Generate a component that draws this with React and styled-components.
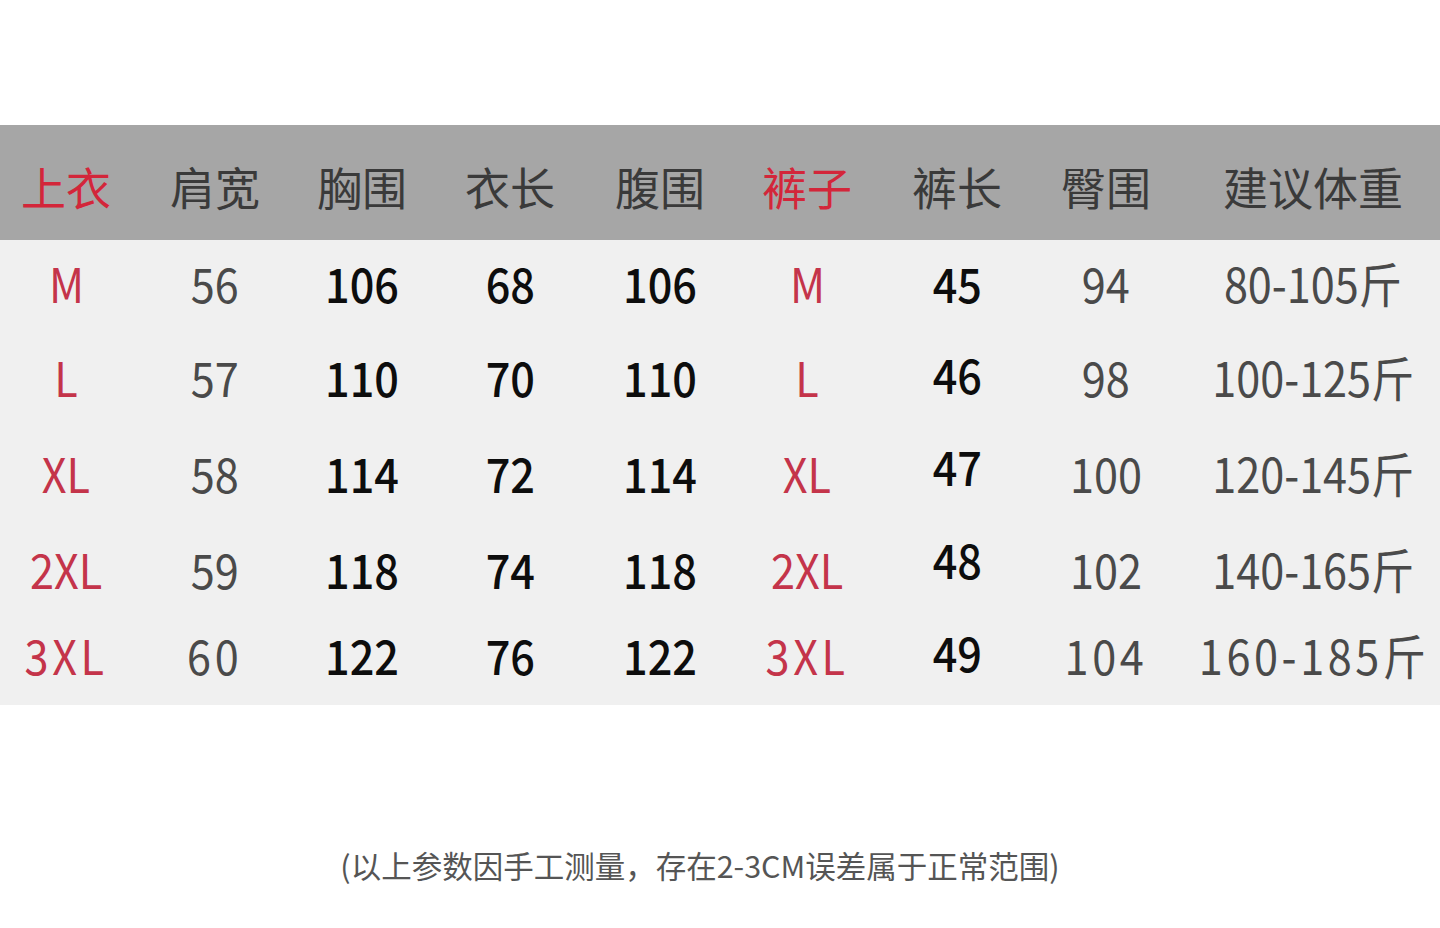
import React from 'react';
import styled, { createGlobalStyle } from 'styled-components';

const GlobalStyle = createGlobalStyle`
  html, body {
    margin: 0;
    padding: 0;
    background: #fff;
    font-family: "Noto Sans CJK SC", "Noto Sans", sans-serif;
  }
`;

const Page = styled.div`
  width: 1440px;
  height: 928px;
  padding-top: 125px;
  box-sizing: border-box;
  background: #fff;
`;

const Table = styled.div`
  width: 100%;
`;

const COLS = '132px 166px 128px 168px 132px 162px 138px 160px 1fr';

const HeaderRow = styled.div`
  display: grid;
  grid-template-columns: ${COLS};
  height: 115px;
  padding-top: 8px;
  box-sizing: border-box;
  background: #a6a6a6;
  align-items: center;
`;

const HeadCell = styled.div`
  text-align: center;
  font-size: 45px;
  line-height: 1;
  color: ${p => (p.$red ? '#d3263a' : '#3a3a3a')};
`;

const Body = styled.div`
  background: #f0f0f0;
  padding-bottom: 9px;
`;

const Row = styled.div`
  display: grid;
  grid-template-columns: ${COLS};
  height: ${p => p.$h}px;
  align-items: center;
`;

const tones = {
  red: { color: '#c4344a', weight: 400 },
  gray: { color: '#4a4a4a', weight: 400 },
  dark: { color: '#0d0d0d', weight: 500 },
};

const Cell = styled.div`
  text-align: center;
  line-height: 1;
  white-space: nowrap;
`;

const Value = styled.span`
  display: inline-block;
  font-size: 48px;
  color: ${p => tones[p.$tone].color};
  font-weight: ${p => tones[p.$tone].weight};
  letter-spacing: ${p => (p.$spread && p.$tone !== 'dark' ? 4 : 0)}px;
  transform: translateY(${p => (p.$lift || 0) - 4}px) scaleX(0.9);
`;

const Note = styled.div`
  margin-top: 140px;
  padding-right: 40px;
  text-align: center;
  line-height: 40px;
  font-size: 30.5px;
  color: #555;
  white-space: nowrap;
`;

const headers = [
  { t: '上衣', red: true },
  { t: '肩宽' },
  { t: '胸围' },
  { t: '衣长' },
  { t: '腹围' },
  { t: '裤子', red: true },
  { t: '裤长' },
  { t: '臀围' },
  { t: '建议体重' },
];

const colTones = ['red', 'gray', 'dark', 'dark', 'dark', 'red', 'dark', 'gray', 'gray'];

const rows = [
  { h: 92, lift: 0, cells: ['M', '56', '106', '68', '106', 'M', '45', '94', '80-105斤'] },
  { h: 96, lift: -3, cells: ['L', '57', '110', '70', '110', 'L', '46', '98', '100-125斤'] },
  { h: 96, lift: -7, cells: ['XL', '58', '114', '72', '114', 'XL', '47', '100', '120-145斤'] },
  { h: 96, lift: -10, cells: ['2XL', '59', '118', '74', '118', '2XL', '48', '102', '140-165斤'] },
  { h: 76, lift: -3, spread: true, cells: ['3XL', '60', '122', '76', '122', '3XL', '49', '104', '160-185斤'] },
];

export default function App() {
  return (
    <>
      <GlobalStyle />
      <Page>
        <Table>
          <HeaderRow>
            {headers.map(h => (
              <HeadCell key={h.t} $red={h.red}>{h.t}</HeadCell>
            ))}
          </HeaderRow>
          <Body>
            {rows.map((r, i) => (
              <Row key={i} $h={r.h}>
                {r.cells.map((c, j) => (
                  <Cell key={j}>
                    <Value
                      $tone={colTones[j]}
                      $spread={r.spread}
                      $lift={j === 6 ? r.lift : 0}
                    >
                      {c}
                    </Value>
                  </Cell>
                ))}
              </Row>
            ))}
          </Body>
        </Table>
        <Note>(以上参数因手工测量，存在2-3CM误差属于正常范围)</Note>
      </Page>
    </>
  );
}
